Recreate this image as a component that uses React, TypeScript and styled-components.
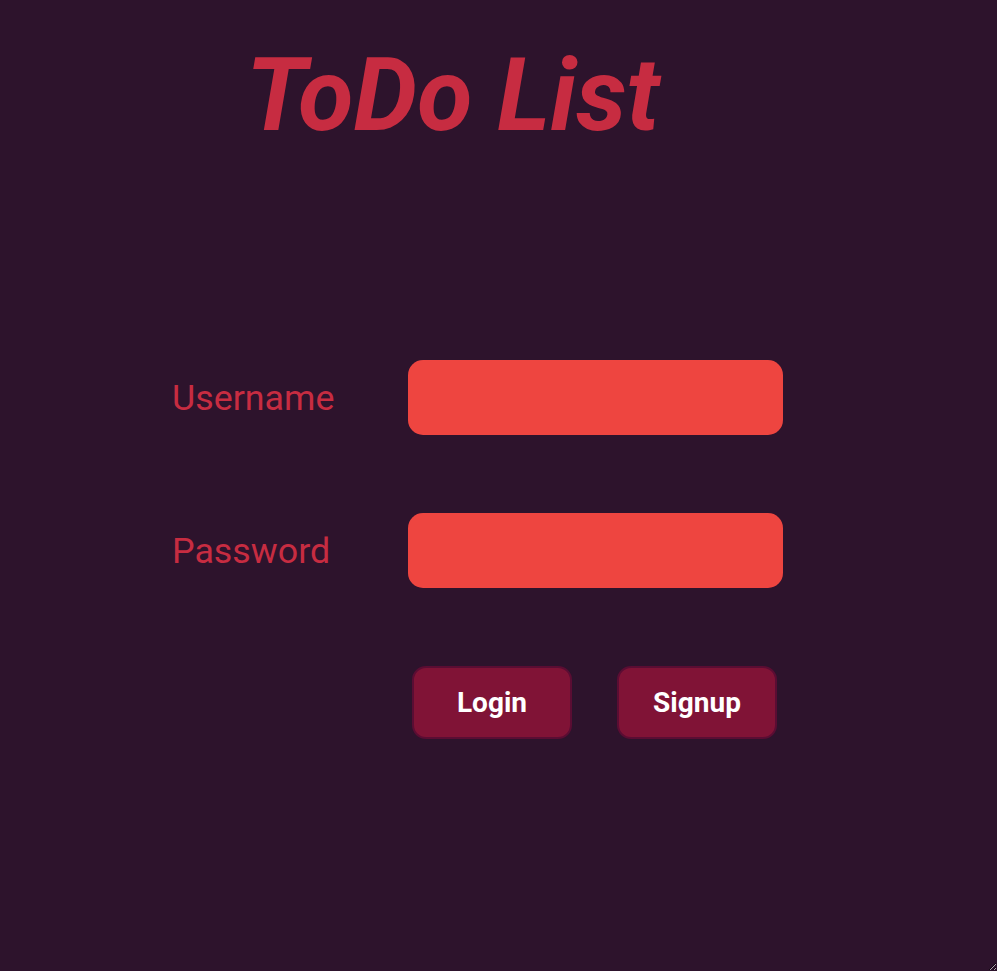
import React from "react";
import styled, { createGlobalStyle } from "styled-components";

const GlobalStyle = createGlobalStyle`
  html, body {
    margin: 0;
    padding: 0;
    background: #2d132c;
  }
  * {
    box-sizing: border-box;
  }
`;

const Page = styled.div`
  width: 100vw;
  height: 100vh;
  background: #2d132c;
  font-family: Roboto, "Liberation Sans", sans-serif;
  display: flex;
  flex-direction: column;
  overflow: auto;
  resize: both;
`;

const Title = styled.h1`
  margin: 37px 0 0 0;
  padding-left: 246px;
  font-size: 101px;
  font-weight: 700;
  font-style: italic;
  line-height: 1.171;
  color: #c72c41;
`;

const Form = styled.form`
  margin-top: 205px;
  padding-left: 172px;
  display: flex;
  flex-direction: column;
  gap: 78px;
`;

const Row = styled.div`
  display: flex;
  align-items: center;
`;

const Label = styled.label`
  width: 236px;
  font-size: 35.8px;
  font-weight: 400;
  color: #c72c41;
`;

const Input = styled.input`
  width: 375px;
  height: 75px;
  border: none;
  border-radius: 15px;
  background: #ee4540;
  outline: none;
  padding: 0 16px;
  font-family: inherit;
  font-size: 24px;
  color: #2d132c;
`;

const Buttons = styled.div`
  display: flex;
  gap: 45px;
  padding-left: 240px;
`;

const Button = styled.button`
  width: 160px;
  height: 73px;
  border: 2px solid #5a0d33;
  border-radius: 14px;
  background: #801336;
  color: #ffffff;
  font-family: inherit;
  font-size: 28px;
  font-weight: 700;
  cursor: pointer;
`;

const App: React.FC = () => {
  return (
    <>
      <GlobalStyle />
      <Page>
        <Title>ToDo List</Title>
        <Form onSubmit={(e) => e.preventDefault()}>
          <Row>
            <Label htmlFor="username">Username</Label>
            <Input id="username" type="text" />
          </Row>
          <Row>
            <Label htmlFor="password">Password</Label>
            <Input id="password" type="password" />
          </Row>
          <Buttons>
            <Button type="submit">Login</Button>
            <Button type="button">Signup</Button>
          </Buttons>
        </Form>
      </Page>
    </>
  );
};

export default App;
